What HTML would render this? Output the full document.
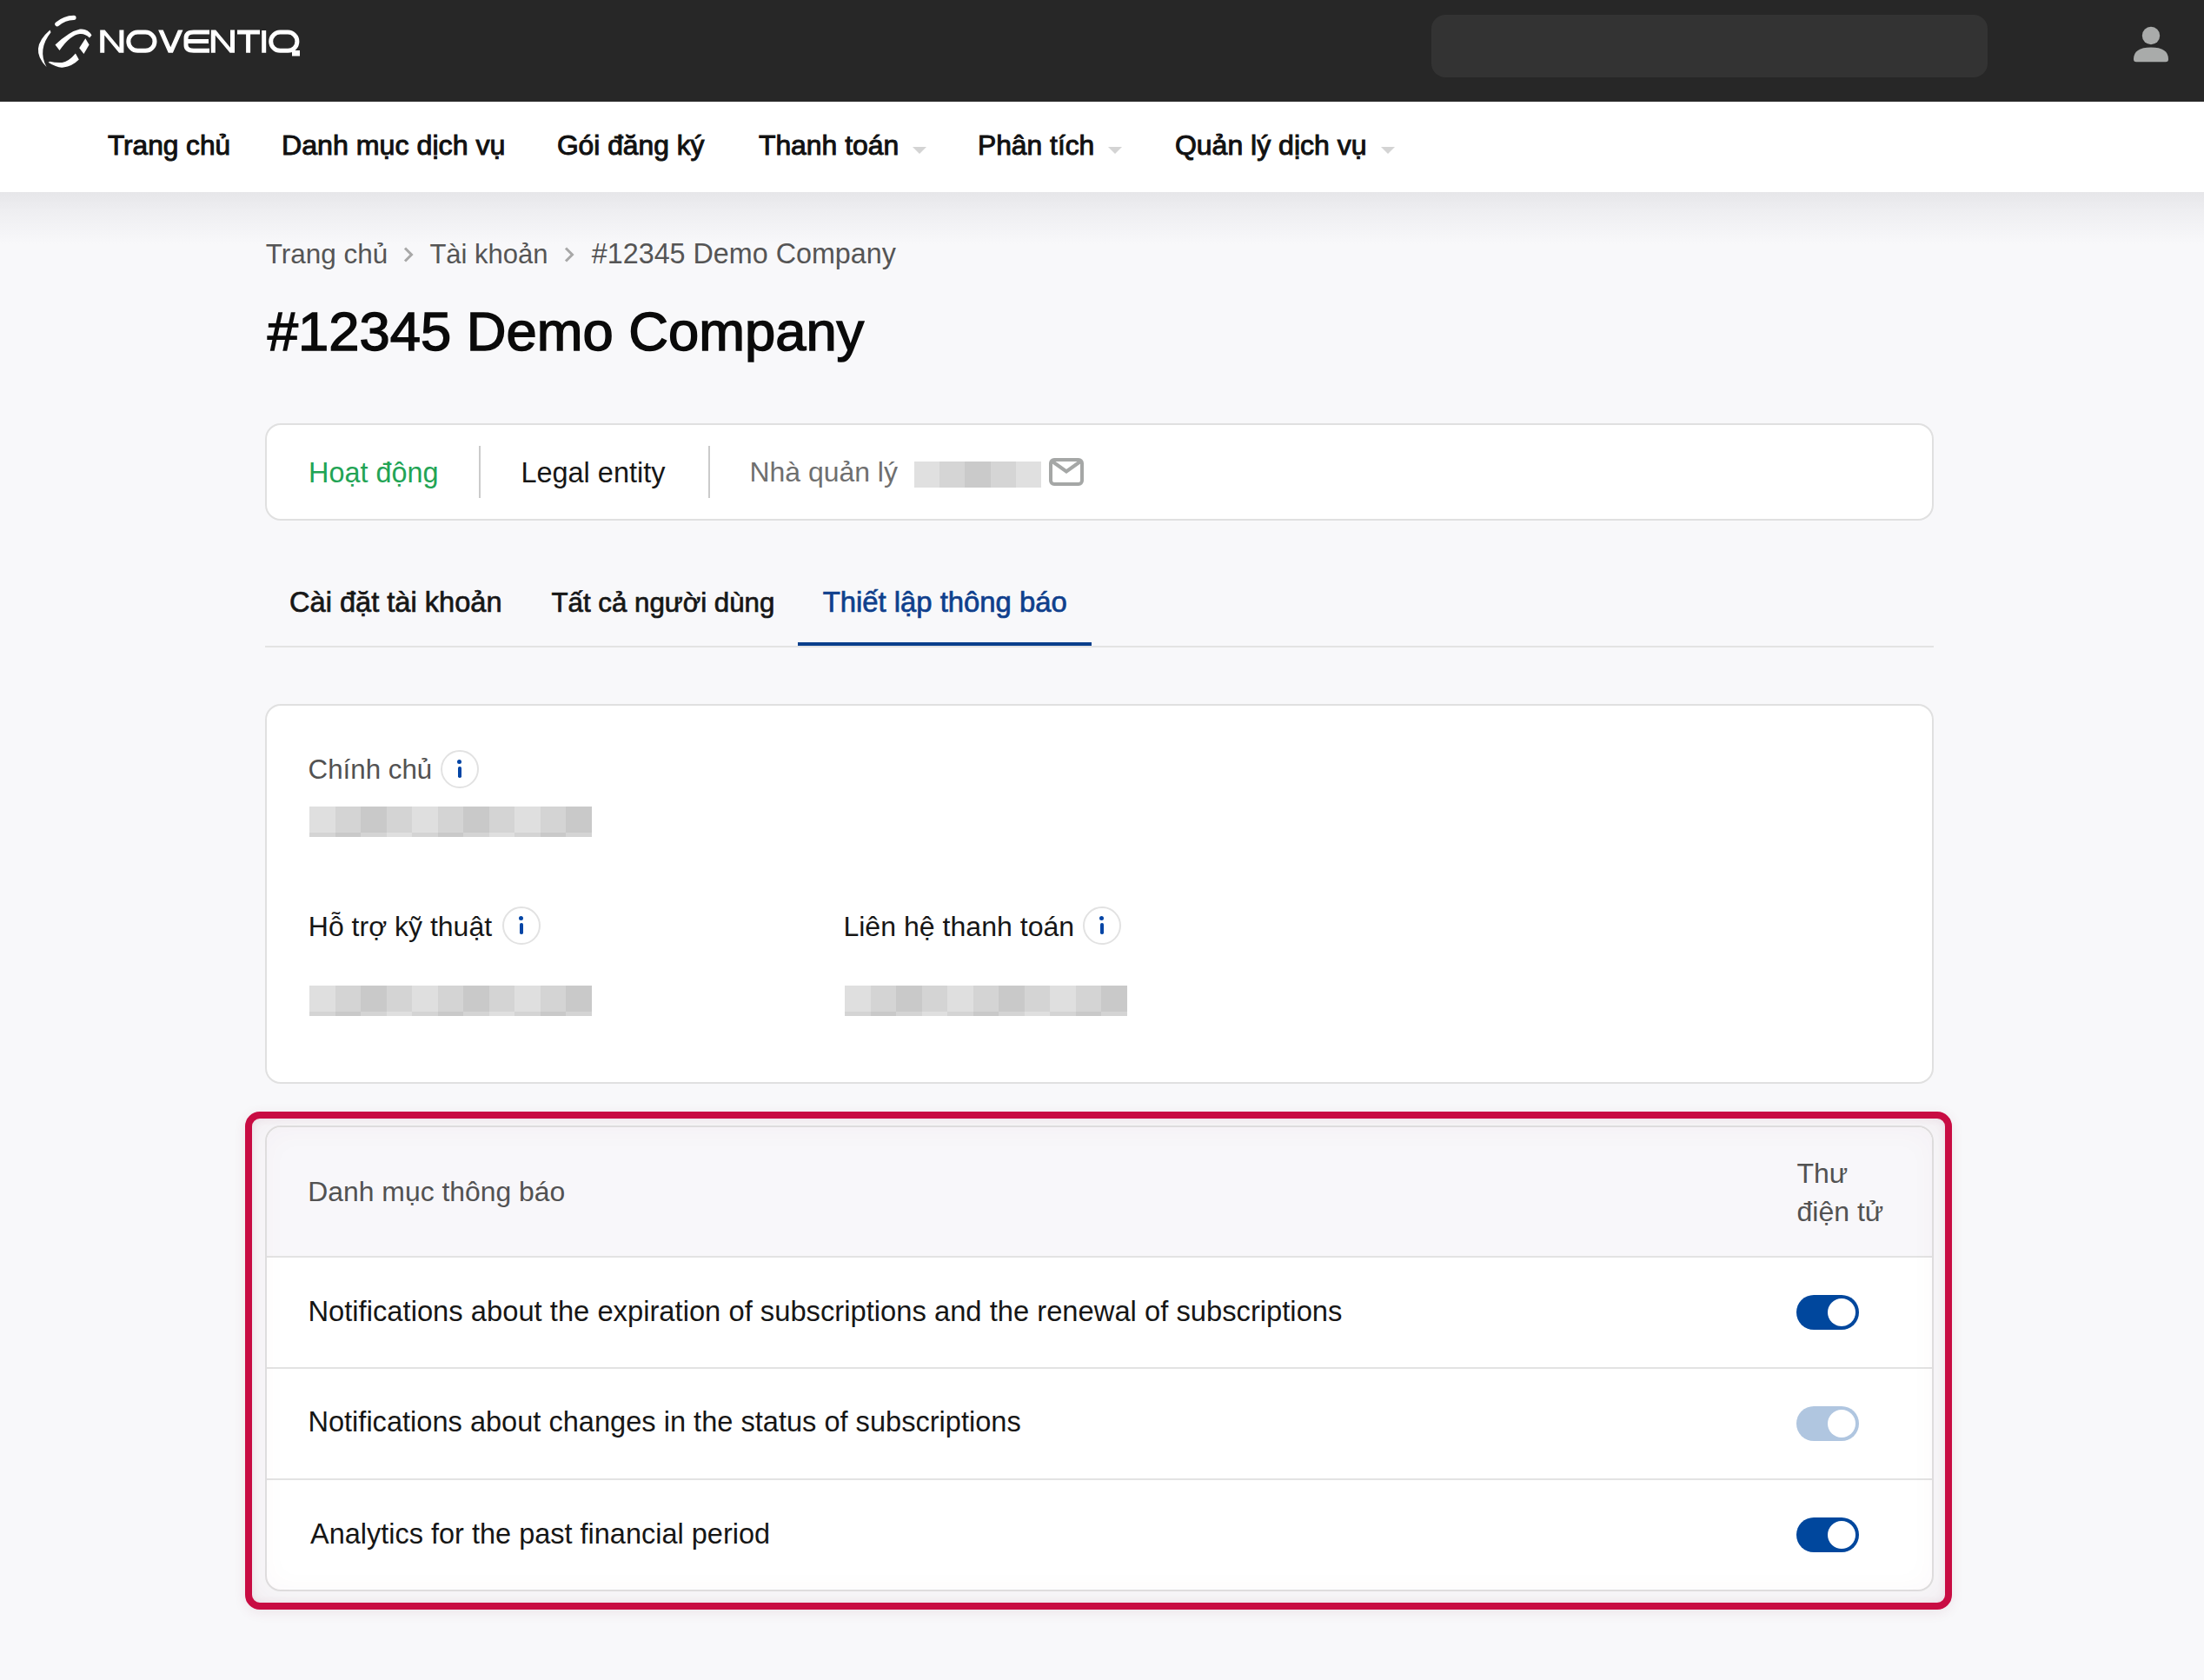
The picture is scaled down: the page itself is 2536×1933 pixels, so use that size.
<!DOCTYPE html>
<html>
<head>
<meta charset="utf-8">
<style>
html,body{margin:0;padding:0}
body{width:2536px;height:1933px;overflow:hidden;position:relative;background:#f8f8fa;font-family:"Liberation Sans",sans-serif;color:#161616}
.a{position:absolute;white-space:nowrap;line-height:1}
#hdr{position:absolute;left:0;top:0;width:2536px;height:117px;background:#272727}
#search{position:absolute;left:1647px;top:17px;width:640px;height:72px;background:#333333;border-radius:16px}
#nav{position:absolute;left:0;top:117px;width:2536px;height:104px;background:#fff}
#navsh{position:absolute;left:0;top:221px;width:2536px;height:60px;background:linear-gradient(#e6e6e9,#eeeef1 35%,#f8f8fa)}
.nav{font-weight:400;color:#111;-webkit-text-stroke:1px #111}
.tri{position:absolute;width:0;height:0;border-left:8px solid transparent;border-right:8px solid transparent;border-top:8px solid #d4d4d4}
.bc{color:#555}
.card{position:absolute;background:#fff;border:2px solid #e0e0e0;border-radius:18px;box-sizing:border-box}
.vd{position:absolute;width:2px;background:#cbcbcb}
.info{position:absolute;width:44px;height:44px;box-sizing:border-box;border:2px solid #e2e2e2;border-radius:50%}
.info:before{content:"";position:absolute;left:17.2px;top:8.9px;width:5.2px;height:5.2px;border-radius:50%;background:#0445a5}
.info:after{content:"";position:absolute;left:18.2px;top:16.5px;width:3.7px;height:13.5px;background:#0445a5;border-radius:1.8px}
.pix{position:absolute;display:grid}
.tog{position:absolute;width:72px;height:40px;border-radius:20px;background:#00479d}
.tog:after{content:"";position:absolute;right:4px;top:4px;width:32px;height:32px;border-radius:50%;background:#fff}
.tab{-webkit-text-stroke:0.7px currentColor}
.hl{position:absolute;height:2px;background:#e3e3e3}
</style>
</head>
<body>
<div id="hdr">
  <svg width="400" height="117" style="position:absolute;left:0;top:0" viewBox="0 0 400 117">
    <g fill="none" stroke="#fff" stroke-width="5">
      <!-- icon -->
      <path d="M65.8 27.8 Q74 20.5 85 20.3" stroke-width="5.2" stroke-linecap="round"/>
      <!-- letters -->
      
      <rect x="147.8" y="37.1" width="30.2" height="21.2" rx="10.6"/>
      
      <path d="M241 37.1 H223 Q214 37.1 214 44 V52 Q214 58.2 223 58.2 H241 M214 47.6 H240"/>
      
      <path d="M273 37.1 H299 M285.6 35 V60.7 M303.7 35 V60.7"/>
      <rect x="311.7" y="37.1" width="30.2" height="21.2" rx="10.6"/>
    </g>
    <g fill="#fff">
      <path d="M57.5 34.5 Q32.5 56 53.5 77 Q42.8 57 58.5 37.2 Z"/>
      <path d="M63.5 51.5 Q80 36 92 33.5 Q101 32.5 105.5 40.5 L103 43.5 Q98 38.5 92 39 Q81 40 68.5 58 Z"/>
      <path d="M55.5 71.8 Q66 78.5 73 77.5 Q83 76.5 90.8 68.6 L86.9 61.6 Q79 71 71.5 72 Q64 72.5 57.5 70.8 Z"/>
    </g>
    <g fill="#fff">
      <path d="M115.2 34.6 H120.2 V60.7 H115.2 Z M137.4 34.6 H142.4 V60.7 H137.4 Z M115.2 34.6 H120.6 L142.4 60.7 H137 Z"/>
      <path d="M242.8 34.6 H247.8 V60.7 H242.8 Z M265 34.6 H270 V60.7 H265 Z M242.8 34.6 H248.2 L270 60.7 H264.6 Z"/>
      <path d="M182.1 34.6 H187.7 L196.3 54.3 L204.9 34.6 H210.5 L198.9 60.7 H193.7 Z"/>
    </g>
    <path d="M91.2 55.2 L98.3 44.3 L102.6 51.4 L96.4 61.9 Z" fill="#fff"/>
    <rect x="336" y="58" width="9" height="6.5" fill="#fff"/>
  </svg>
  <div id="search"></div>
  <svg width="42" height="42" style="position:absolute;left:2454px;top:30px" viewBox="0 0 42 42">
    <circle cx="21" cy="11" r="10.2" fill="#a9abaa"/>
    <path d="M1 38 Q1 24.4 21 24.4 Q41 24.4 41 38 Q41 41.3 38 41.3 H4 Q1 41.3 1 38 Z" fill="#a9abaa"/>
  </svg>
</div>
<div id="nav">
</div>
<div id="navsh"></div>
<div class="a nav" style="left:123.9px;top:151.7px;font-size:31.63px">Trang chủ</div>
<div class="a nav" style="left:323.9px;top:151.2px;font-size:32.2px">Danh mục dịch vụ</div>
<div class="a nav" style="left:640.9px;top:151.6px;font-size:31.78px">Gói đăng ký</div>
<div class="a nav" style="left:872.9px;top:151.5px;font-size:31.91px">Thanh toán</div>
<div class="tri" style="left:1050px;top:169px"></div>
<div class="a nav" style="left:1125px;top:151.6px;font-size:31.79px">Phân tích</div>
<div class="tri" style="left:1275px;top:169px"></div>
<div class="a nav" style="left:1351.9px;top:151.4px;font-size:32.02px">Quản lý dịch vụ</div>
<div class="tri" style="left:1589px;top:169px"></div>

<div class="a bc" style="left:305.8px;top:276.6px;font-size:31.49px">Trang chủ</div>
<svg width="14" height="20" style="position:absolute;left:463px;top:283px" viewBox="0 0 14 20"><path d="M3 2.5 L10.5 10 L3 17.5" fill="none" stroke="#a8a8a8" stroke-width="3"/></svg>
<div class="a bc" style="left:494.4px;top:277px;font-size:31.03px">Tài khoản</div>
<svg width="14" height="20" style="position:absolute;left:648px;top:283px" viewBox="0 0 14 20"><path d="M3 2.5 L10.5 10 L3 17.5" fill="none" stroke="#a8a8a8" stroke-width="3"/></svg>
<div class="a bc" style="left:680.8px;top:276px;font-size:32.31px">#12345 Demo Company</div>

<div class="a" style="left:307.8px;top:350.4px;font-size:63.33px;font-weight:400;color:#0a0a0a;-webkit-text-stroke:1.5px #0a0a0a">#12345 Demo Company</div>

<!-- card 1 -->
<div class="card" style="left:305px;top:487px;width:1920px;height:112px"></div>
<div class="a" style="left:355.1px;top:527.6px;font-size:32.42px;color:#22a455">Hoạt động</div>
<div class="vd" style="left:551px;top:513px;height:60px"></div>
<div class="a" style="left:599.4px;top:527.5px;font-size:32.47px;color:#161616">Legal entity</div>
<div class="vd" style="left:815px;top:513px;height:60px"></div>
<div class="a" style="left:862.4px;top:527.9px;font-size:31.96px;color:#6f6f6f">Nhà quản lý</div>
<div style="position:absolute;left:1052px;top:531px;width:146px;height:30px;display:flex">
  <div style="flex:1;background:#e0e0e0"></div><div style="flex:1;background:#d5d5d5"></div><div style="flex:1;background:#cacaca"></div><div style="flex:1;background:#d5d5d5"></div><div style="flex:1;background:#e0e0e0"></div>
</div>
<svg width="42" height="34" style="position:absolute;left:1206px;top:526px" viewBox="0 0 42 34">
  <rect x="3" y="3" width="36" height="28" rx="4" fill="none" stroke="#a5a7a6" stroke-width="4"/>
  <path d="M3.5 4 L21 16.5 L38.5 4" fill="none" stroke="#a5a7a6" stroke-width="4"/>
</svg>

<!-- tabs -->
<div class="a tab" style="left:333px;top:677px;font-size:32.6px">Cài đặt tài khoản</div>
<div class="a tab" style="left:634.5px;top:678.1px;font-size:31.26px">Tất cả người dùng</div>
<div class="a tab" style="left:946.7px;top:676.8px;font-size:32.84px;color:#0f3f8c">Thiết lập thông báo</div>
<div class="hl" style="left:305px;top:743px;width:1920px"></div>
<div style="position:absolute;left:918px;top:739px;width:338px;height:4px;background:#0a3f8c"></div>

<!-- card 2 -->
<div class="card" style="left:305px;top:810px;width:1920px;height:437px"></div>
<div class="a" style="left:354.6px;top:870.1px;font-size:31.31px;color:#525252">Chính chủ</div>
<div class="info" style="left:507px;top:863px"></div>
<div class="a" style="left:354.8px;top:1049.9px;font-size:32px;color:#161616">Hỗ trợ kỹ thuật</div>
<div class="info" style="left:578px;top:1043px"></div>
<div class="a" style="left:970.4px;top:1050.3px;font-size:32.08px;color:#161616">Liên hệ thanh toán</div>
<div class="info" style="left:1246px;top:1043px"></div>

<!-- pix blocks -->
<div id="pixA" class="pixbox" style="position:absolute;left:356px;top:928px"><div style="display:grid;grid-template-columns:repeat(11,29.55px);grid-template-rows:29.5px 5.5px"><i style="background:#dfdfdf"></i><i style="background:#d4d4d4"></i><i style="background:#c9c9c9"></i><i style="background:#d4d4d4"></i><i style="background:#dfdfdf"></i><i style="background:#d4d4d4"></i><i style="background:#c9c9c9"></i><i style="background:#d4d4d4"></i><i style="background:#dfdfdf"></i><i style="background:#d4d4d4"></i><i style="background:#c9c9c9"></i><i style="background:#d4d4d4"></i><i style="background:#c9c9c9"></i><i style="background:#d4d4d4"></i><i style="background:#dfdfdf"></i><i style="background:#d4d4d4"></i><i style="background:#c9c9c9"></i><i style="background:#d4d4d4"></i><i style="background:#dfdfdf"></i><i style="background:#d4d4d4"></i><i style="background:#c9c9c9"></i><i style="background:#d4d4d4"></i></div></div>
<div id="pixB" class="pixbox" style="position:absolute;left:356px;top:1134px"><div style="display:grid;grid-template-columns:repeat(11,29.55px);grid-template-rows:29.5px 5.5px"><i style="background:#dfdfdf"></i><i style="background:#d4d4d4"></i><i style="background:#c9c9c9"></i><i style="background:#d4d4d4"></i><i style="background:#dfdfdf"></i><i style="background:#d4d4d4"></i><i style="background:#c9c9c9"></i><i style="background:#d4d4d4"></i><i style="background:#dfdfdf"></i><i style="background:#d4d4d4"></i><i style="background:#c9c9c9"></i><i style="background:#d4d4d4"></i><i style="background:#c9c9c9"></i><i style="background:#d4d4d4"></i><i style="background:#dfdfdf"></i><i style="background:#d4d4d4"></i><i style="background:#c9c9c9"></i><i style="background:#d4d4d4"></i><i style="background:#dfdfdf"></i><i style="background:#d4d4d4"></i><i style="background:#c9c9c9"></i><i style="background:#d4d4d4"></i></div></div>
<div id="pixC" class="pixbox" style="position:absolute;left:972px;top:1134px"><div style="display:grid;grid-template-columns:repeat(11,29.55px);grid-template-rows:29.5px 5.5px"><i style="background:#dfdfdf"></i><i style="background:#d4d4d4"></i><i style="background:#c9c9c9"></i><i style="background:#d4d4d4"></i><i style="background:#dfdfdf"></i><i style="background:#d4d4d4"></i><i style="background:#c9c9c9"></i><i style="background:#d4d4d4"></i><i style="background:#dfdfdf"></i><i style="background:#d4d4d4"></i><i style="background:#c9c9c9"></i><i style="background:#d4d4d4"></i><i style="background:#c9c9c9"></i><i style="background:#d4d4d4"></i><i style="background:#dfdfdf"></i><i style="background:#d4d4d4"></i><i style="background:#c9c9c9"></i><i style="background:#d4d4d4"></i><i style="background:#dfdfdf"></i><i style="background:#d4d4d4"></i><i style="background:#c9c9c9"></i><i style="background:#d4d4d4"></i></div></div>

<!-- table card -->
<div class="card" style="left:305px;top:1295px;width:1920px;height:536px;overflow:hidden">
  <div style="position:absolute;left:0;top:0;width:100%;height:150px;background:#f8f7fa;border-bottom:2px solid #e3e3e3;box-sizing:border-box"></div>
</div>
<div class="a" style="left:354.3px;top:1356.2px;font-size:31.89px;color:#525252">Danh mục thông báo</div>
<div class="a" style="left:2067.5px;top:1333.5px;font-size:32px;color:#525252;line-height:44px;top:1328px">Thư<br>điện tử</div>
<div class="a" style="left:354.4px;top:1492.7px;font-size:32.74px">Notifications about the expiration of subscriptions and the renewal of subscriptions</div>
<div class="tog" style="left:2067px;top:1490px"></div>
<div class="hl" style="left:307px;top:1573px;width:1916px"></div>
<div class="a" style="left:354.4px;top:1620.3px;font-size:32.58px">Notifications about changes in the status of subscriptions</div>
<div class="tog" style="left:2067px;top:1618px;background:#b0c6e0"></div>
<div class="hl" style="left:307px;top:1701px;width:1916px"></div>
<div class="a" style="left:357px;top:1748.5px;font-size:32.49px">Analytics for the past financial period</div>
<div class="tog" style="left:2067px;top:1746px"></div>

<!-- red outline -->
<div style="position:absolute;left:282px;top:1279px;width:1964px;height:573px;box-sizing:border-box;border:8px solid #c80c43;border-radius:17px;box-shadow:0 3px 14px rgba(140,50,80,0.10), inset 0 0 10px rgba(140,50,80,0.10), inset 0 0 44px rgba(140,50,80,0.06)"></div>

</body>
</html>
